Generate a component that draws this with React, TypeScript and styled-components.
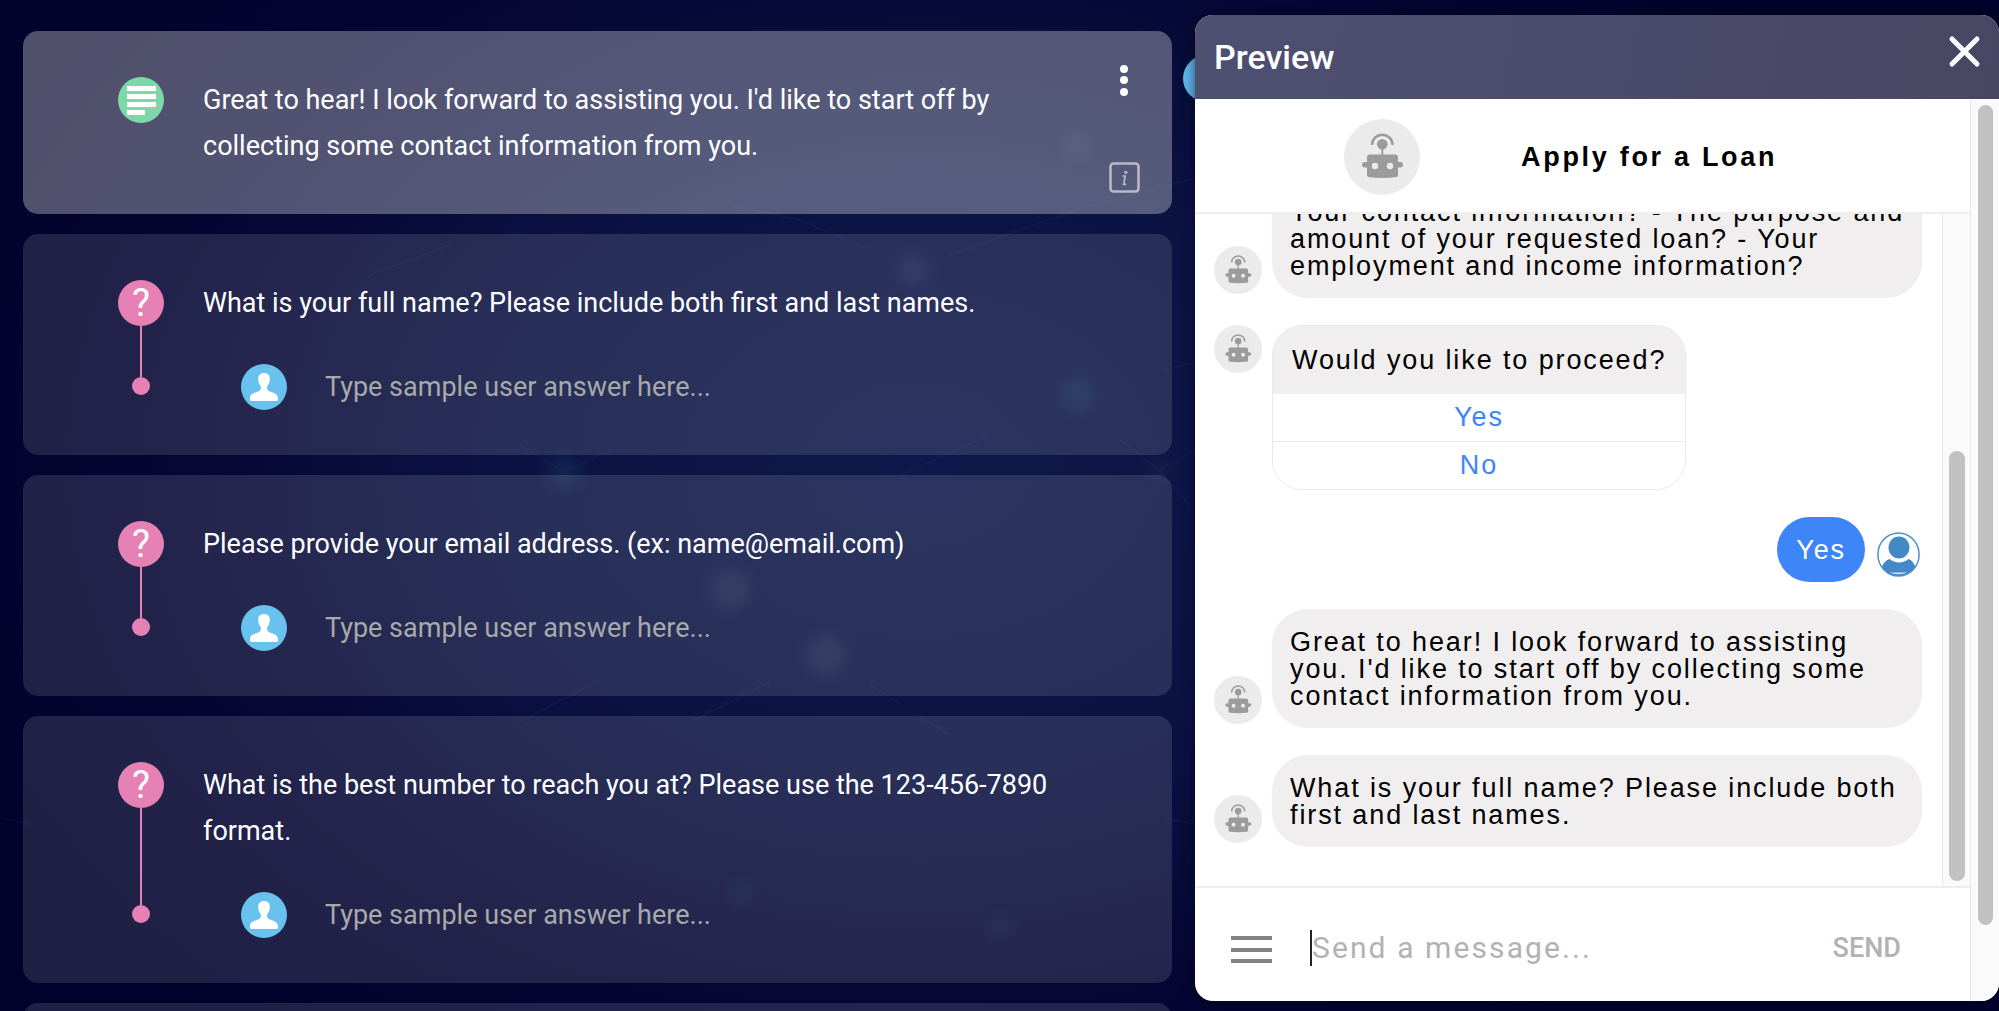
import React from "react";
import styled, { createGlobalStyle, css } from "styled-components";

const GlobalStyle = createGlobalStyle`
  *, *::before, *::after { box-sizing: border-box; }
  body {
    margin: 0;
    background: #02022c;
    font-family: Roboto, "Liberation Sans", sans-serif;
  }
  button, input { font: inherit; margin: 0; }
`;

const Page = styled.div`
  position: relative;
  display: grid;
  grid-template-columns: minmax(0, 1fr) min(804px, 50vw);
  grid-template-rows: minmax(0, 1fr);
  height: 100vh;
  min-height: 600px;
  overflow: hidden;
  background:
    radial-gradient(ellipse 52% 75% at 46% 46%, #0e184a 0%, #0b1342 40%, rgba(6, 7, 54, 0.6) 75%, rgba(2, 2, 44, 0) 100%),
    #02022c;
`;

const Backdrop = styled.svg`
  position: absolute;
  inset: 0;
  width: 100%;
  height: 100%;
`;

const Flow = styled.main`
  position: relative;
  display: flex;
  flex-direction: column;
  gap: 20px;
  padding: 31px 23px 0;
  min-width: 0;
`;

const StepCard = styled.article<{ $active?: boolean }>`
  flex: none;
  display: grid;
  grid-template-columns: 46px minmax(0, 1fr) 30px;
  column-gap: 39px;
  padding: 46px 33px 45px 95px;
  min-height: 183px;
  border-radius: 15px;
  background: ${(p) => (p.$active ? "rgba(255, 255, 255, 0.31)" : "rgba(255, 255, 255, 0.12)")};
  color: #fff;
  font-size: 27px;
  line-height: 46px;
`;

const Rail = styled.div`
  display: flex;
  flex-direction: column;
  align-items: center;
`;

const Badge = styled.span<{ $color: string }>`
  flex: none;
  display: grid;
  place-items: center;
  width: 46px;
  height: 46px;
  border-radius: 50%;
  background: ${(p) => p.$color};
  font-size: 38px;
  line-height: 46px;
`;

const RailLine = styled.span`
  flex: 1;
  width: 2px;
  background: #e681b6;
`;

const RailDot = styled.span`
  width: 18px;
  height: 18px;
  margin-bottom: 15px;
  border-radius: 50%;
  background: #e681b6;
`;

const StepBody = styled.div`
  display: flex;
  flex-direction: column;
  gap: 38px;
`;

const StepText = styled.p`
  margin: 0;
`;

const AnswerRow = styled.label`
  display: flex;
  gap: 38px;
  padding-left: 38px;
`;

const AnswerInput = styled.input`
  flex: 1;
  min-width: 0;
  height: 46px;
  padding: 0;
  border: 0;
  outline: 0;
  background: none;
  color: #fff;
  &::placeholder { color: #a9a9a9; opacity: 1; }
`;

const CardActions = styled.div`
  display: flex;
  flex-direction: column;
  align-items: center;
  justify-content: space-between;
  margin: -12px 0 -24px;
`;

const IconButton = styled.button`
  display: block;
  padding: 0;
  border: 0;
  background: none;
  color: #fff;
  line-height: 0;
  cursor: pointer;
`;

const SideHandle = styled.button`
  position: absolute;
  top: 55px;
  right: -35px;
  width: 47px;
  height: 47px;
  padding: 0;
  border: 0;
  border-radius: 50%;
  background: #5fb4e6;
`;

const PanelArea = styled.aside`
  position: relative;
  display: flex;
  padding: 15px 0 10px;
  min-height: 0;
`;

const Panel = styled.section`
  flex: 1;
  display: flex;
  flex-direction: column;
  min-width: 0;
  border-radius: 18px;
  overflow: hidden;
  background: #fff;
  box-shadow: 0 0 12px rgba(0, 0, 20, 0.6);
`;

const PanelHeader = styled.header`
  flex: none;
  display: flex;
  justify-content: space-between;
  align-items: flex-start;
  height: 84px;
  padding: 20px 18px 0 19px;
  background: linear-gradient(100deg, #4d5071, #4b4b6b 50%, #494663);
`;

const PanelTitle = styled.h2`
  margin: 0;
  color: #fff;
  font-size: 34px;
  font-weight: 500;
  line-height: 44px;
`;

const PanelBody = styled.div`
  flex: 1;
  display: flex;
  min-height: 0;
`;

const Chat = styled.div`
  flex: 1;
  display: flex;
  flex-direction: column;
  min-width: 0;
`;

const ChatHeader = styled.header`
  flex: none;
  display: flex;
  align-items: center;
  gap: 101px;
  height: 115px;
  padding: 3px 0 0 149px;
  border-bottom: 2px solid #eeeeee;
`;

const chatType = css`
  font-family: "Liberation Sans", Arial, sans-serif;
  font-size: 27px;
  line-height: 27px;
  letter-spacing: 0.07em;
`;

const ChatTitle = styled.h3`
  ${chatType}
  margin: 0;
  font-weight: 700;
  letter-spacing: 0.1em;
`;

const ChatScroll = styled.div`
  flex: 1;
  display: flex;
  min-height: 0;
`;

const Messages = styled.div`
  ${chatType}
  flex: 1;
  display: flex;
  flex-direction: column;
  justify-content: flex-end;
  gap: 27px;
  min-width: 0;
  padding: 0 20px 39px 19px;
  overflow: hidden;
`;

const MessageRow = styled.div<{ $user?: boolean; $top?: boolean }>`
  flex: none;
  display: flex;
  gap: ${(p) => (p.$user ? "12px" : "10px")};
  padding-right: ${(p) => (p.$user ? "2px" : "0")};
  align-items: ${(p) => (p.$top ? "flex-start" : "flex-end")};
  justify-content: ${(p) => (p.$user ? "flex-end" : "flex-start")};
`;

const AvatarSlot = styled.span<{ $lift: number }>`
  flex: none;
  line-height: 0;
  padding-bottom: ${(p) => p.$lift}px;
`;

const Bubble = styled.div<{ $user?: boolean }>`
  flex: ${(p) => (p.$user ? "none" : "1")};
  padding: ${(p) => (p.$user ? "20px 19px 18px" : "20px 14px 18px 18px")};
  border-radius: 36px;
  background: ${(p) => (p.$user ? "#3e85f7" : "#f0eeef")};
  color: ${(p) => (p.$user ? "#fff" : "#000")};
`;

const ChoiceCard = styled.div`
  width: 414px;
  border: 1px solid #e9e8e9;
  border-radius: 30px;
  overflow: hidden;
`;

const ChoicePrompt = styled.p`
  margin: 0;
  padding: 21px 0 20px 19px;
  background: #f0eeef;
  white-space: nowrap;
`;

const Choice = styled.button`
  display: block;
  width: 100%;
  height: 47px;
  padding: 0;
  border: 0;
  background: #fff;
  color: #3e85f7;
  letter-spacing: inherit;
  cursor: pointer;
  & + & { height: 48px; border-top: 1px solid #e9e8e9; }
`;

const ScrollTrack = styled.div<{ $outer?: boolean }>`
  flex: none;
  width: ${(p) => (p.$outer ? 29 : 28)}px;
  padding: ${(p) => (p.$outer ? "6px 6px 0 7px" : "0 5px 5px 6px")};
  display: flex;
  flex-direction: column;
  justify-content: ${(p) => (p.$outer ? "flex-start" : "flex-end")};
  border-left: 1px solid #e8e8e8;
  background: #fafafa;
`;

const ScrollThumb = styled.div<{ $size: number }>`
  height: ${(p) => p.$size}%;
  border-radius: 8px;
  background: #c1c1c1;
`;

const Composer = styled.form`
  flex: none;
  display: flex;
  align-items: center;
  height: 115px;
  padding: 6px 69px 0 36px;
  border-top: 2px solid #eeeeee;
`;

const MessageField = styled.label`
  flex: 1;
  display: flex;
  min-width: 0;
  margin-left: 38px;
`;

const Caret = styled.span`
  flex: none;
  width: 2px;
  height: 36px;
  background: #222;
`;

const MessageInput = styled.input`
  flex: 1;
  min-width: 0;
  height: 36px;
  padding: 0;
  border: 0;
  outline: 0;
  background: none;
  font-size: 30px;
  letter-spacing: 0.07em;
  color: #333;
  &::placeholder { color: #b2b2b2; opacity: 1; }
`;

const SendButton = styled.button`
  padding: 0;
  border: 0;
  background: none;
  color: #b2b2b2;
  font-size: 27px;
  font-weight: 500;
  line-height: 36px;
`;

function BotAvatar({ size }: { size: number }) {
  return (
    <svg width={size} height={size} viewBox="0 0 76 76" aria-hidden="true">
      <circle cx="38" cy="38" r="38" fill="#ebebeb" />
      <path d="M28 26a10.3 10.3 0 0 1 20.6 0" fill="none" stroke="#9b9b9b" strokeWidth="2.4" />
      <circle cx="38.3" cy="25.3" r="5.3" fill="#9b9b9b" />
      <path d="M37.3 28h2v9h-2z" fill="#9b9b9b" />
      <rect x="18" y="43" width="41" height="5.5" rx="2.7" fill="#9b9b9b" />
      <path
        fill="#9b9b9b"
        d="M26 35.5h25a3 3 0 0 1 3 3V56c0 1.5-1 2-2.5 2.3C43 59.3 34 59.3 25.5 58.3 24 58 23 57.5 23 56V38.5a3 3 0 0 1 3-3z"
      />
      <circle cx="31" cy="47" r="3.2" fill="#ebebeb" />
      <circle cx="46" cy="47" r="3.2" fill="#ebebeb" />
    </svg>
  );
}

function PersonIcon() {
  return (
    <svg width="28" height="28" viewBox="0 0 28 28" aria-hidden="true">
      <path
        fill="#fff"
        d="M14 0c4 0 6 2.5 5.800 6.600-.1 2.800-1.100 5-2.600 6.400v2.600c0 1.500.9 2.200 2.500 2.800C24 20 28 20.800 28 25.300c0 1.800-.4 2.700-1.200 2.700H1.200C.4 28 0 27.100 0 25.300 0 20.800 4 20 8.300 18.400c1.600-.6 2.500-1.300 2.500-2.800V13C9.300 11.600 8.300 9.400 8.200 6.600 8 2.500 10 0 14 0z"
      />
    </svg>
  );
}

function UserAvatar() {
  return (
    <svg width="43" height="45" viewBox="0 0 43 45" aria-hidden="true">
      <ellipse cx="21.5" cy="22.5" rx="20.6" ry="21.6" fill="#fff" stroke="#4a94cd" strokeWidth="1.5" />
      <ellipse cx="22" cy="15.5" rx="10.5" ry="11" fill="#4389c5" />
      <path d="M12.5 27c5.5 4.600 13.500 4.600 19 0 3 .8 5.500 4 6.800 7.500C35 40.500 29 44 21.500 44S8.500 40.500 5 34.500C6.500 31 9.500 27.800 12.500 27z" fill="#4389c5" />
      <path d="M13 40.500h17c-4 2.300-13 2.300-17 0z" fill="#d5e6f3" />
    </svg>
  );
}

function QuestionStep({ text }: { text: string }) {
  return (
    <StepCard>
      <Rail>
        <Badge $color="#e681b6">?</Badge>
        <RailLine />
        <RailDot />
      </Rail>
      <StepBody>
        <StepText>{text}</StepText>
        <AnswerRow>
          <Badge $color="#69c2ee">
            <PersonIcon />
          </Badge>
          <AnswerInput type="text" aria-label="Sample user answer" placeholder="Type sample user answer here..." />
        </AnswerRow>
      </StepBody>
    </StepCard>
  );
}

function BotMessage({ children }: { children: React.ReactNode }) {
  return (
    <MessageRow>
      <AvatarSlot $lift={4}>
        <BotAvatar size={48} />
      </AvatarSlot>
      <Bubble>{children}</Bubble>
    </MessageRow>
  );
}

const QUESTIONS = [
  "What is your full name? Please include both first and last names.",
  "Please provide your email address. (ex: name@email.com)",
  "What is the best number to reach you at? Please use the 123-456-7890 format.",
];

const GLOWS: [number, number, number, string][] = [
  [564, 472, 16, "#3f8fae"],
  [1077, 394, 18, "#3f9a9a"],
  [730, 589, 20, "#7d8c9a"],
  [826, 655, 20, "#7d8c9a"],
  [1159, 470, 9, "#8a7fa0"],
  [1000, 926, 10, "#3f8fae"],
  [741, 893, 10, "#3f8f9e"],
  [913, 270, 16, "#6d8aa8"],
  [516, 227, 5, "#3f8fae"],
  [1076, 145, 10, "#8a9ab0"],
];

export default function App() {
  return (
    <>
      <GlobalStyle />
      <Page>
        <Backdrop viewBox="0 0 1999 1011" preserveAspectRatio="xMidYMid slice" aria-hidden="true">
          <defs>
            <filter id="soft" x="-80%" y="-80%" width="260%" height="260%">
              <feGaussianBlur stdDeviation="8" />
            </filter>
          </defs>
          <g stroke="#5d86c4" strokeOpacity="0.06" fill="none" strokeWidth="2">
            <path d="M370 275L450 245M730 205L800 220L870 250M950 255L1070 212L1195 178M1159 470L1120 440M1159 470L1195 450M1159 470L1190 505M564 472L520 445M564 472L610 450M690 722L770 682M870 685L950 735M520 722L600 680M1165 370L1195 362M900 475L990 435M0 818L30 824M1165 818L1195 824" />
          </g>
          <g filter="url(#soft)" opacity="0.13">
            {GLOWS.map(([x, y, r, color]) => (
              <circle key={`${x}-${y}`} cx={x} cy={y} r={r} fill={color} />
            ))}
          </g>
        </Backdrop>

        <Flow>
          <StepCard $active>
            <Rail>
              <Badge $color="#7dd8a9">
                <svg width="29" height="29" viewBox="0 0 29 29" aria-hidden="true">
                  <path fill="#fff" d="M0 0h29v5H0zM0 8h29v5H0zM0 16h29v5H0zM0 24h18v5H0z" />
                </svg>
              </Badge>
            </Rail>
            <StepBody>
              <StepText>
                Great to hear! I look forward to assisting you. I'd like to start off by collecting some contact
                information from you.
              </StepText>
            </StepBody>
            <CardActions>
              <IconButton type="button" aria-label="Step menu">
                <svg width="10" height="32" viewBox="0 0 10 32" aria-hidden="true">
                  <circle cx="5" cy="4" r="4" fill="#fff" />
                  <circle cx="5" cy="15" r="4" fill="#fff" />
                  <circle cx="5" cy="27" r="4" fill="#fff" />
                </svg>
              </IconButton>
              <IconButton type="button" aria-label="Step information">
                <svg width="31" height="31" viewBox="0 0 31 31" aria-hidden="true">
                  <rect x="1.5" y="1.5" width="28" height="28" rx="3" fill="none" stroke="#b9bac2" strokeWidth="2.6" />
                  <circle cx="16.8" cy="10.3" r="1.6" fill="#b9bac2" />
                  <path d="M13.5 14h2.700l-1.500 8.300h2.500" fill="none" stroke="#b9bac2" strokeWidth="1.7" />
                </svg>
              </IconButton>
            </CardActions>
          </StepCard>
          {QUESTIONS.map((q) => (
            <QuestionStep key={q} text={q} />
          ))}
          <StepCard />
          <SideHandle type="button" aria-label="Connection handle" />
        </Flow>

        <PanelArea>
          <Panel>
            <PanelHeader>
              <PanelTitle>Preview</PanelTitle>
              <IconButton type="button" aria-label="Close preview">
                <svg width="33" height="33" viewBox="0 0 33 33" aria-hidden="true">
                  <path d="M4 4l25 25M29 4L4 29" stroke="#fff" strokeWidth="5" strokeLinecap="round" />
                </svg>
              </IconButton>
            </PanelHeader>
            <PanelBody>
              <Chat>
                <ChatHeader>
                  <BotAvatar size={76} />
                  <ChatTitle>Apply for a Loan</ChatTitle>
                </ChatHeader>
                <ChatScroll>
                  <Messages>
                    <BotMessage>
                      Your contact information? - The purpose and amount of your requested loan? - Your employment and
                      income information?
                    </BotMessage>
                    <MessageRow $top>
                      <AvatarSlot $lift={0}>
                        <BotAvatar size={48} />
                      </AvatarSlot>
                      <ChoiceCard>
                        <ChoicePrompt>Would you like to proceed?</ChoicePrompt>
                        <Choice type="button">Yes</Choice>
                        <Choice type="button">No</Choice>
                      </ChoiceCard>
                    </MessageRow>
                    <MessageRow $user>
                      <Bubble $user>Yes</Bubble>
                      <AvatarSlot $lift={5}>
                        <UserAvatar />
                      </AvatarSlot>
                    </MessageRow>
                    <BotMessage>
                      Great to hear! I look forward to assisting you. I'd like to start off by collecting some contact
                      information from you.
                    </BotMessage>
                    <BotMessage>What is your full name? Please include both first and last names.</BotMessage>
                  </Messages>
                  <ScrollTrack>
                    <ScrollThumb $size={64.4} />
                  </ScrollTrack>
                </ChatScroll>
                <Composer>
                  <IconButton type="button" aria-label="Open menu">
                    <svg width="41" height="30" viewBox="0 0 41 30" aria-hidden="true">
                      <path d="M0 3h41v4H0zM0 15h41v4H0zM0 26h41v4H0z" fill="#828282" />
                    </svg>
                  </IconButton>
                  <MessageField>
                    <Caret />
                    <MessageInput type="text" aria-label="Message" placeholder="Send a message..." />
                  </MessageField>
                  <SendButton type="button">SEND</SendButton>
                </Composer>
              </Chat>
              <ScrollTrack $outer>
                <ScrollThumb $size={91.5} />
              </ScrollTrack>
            </PanelBody>
          </Panel>
        </PanelArea>
      </Page>
    </>
  );
}
